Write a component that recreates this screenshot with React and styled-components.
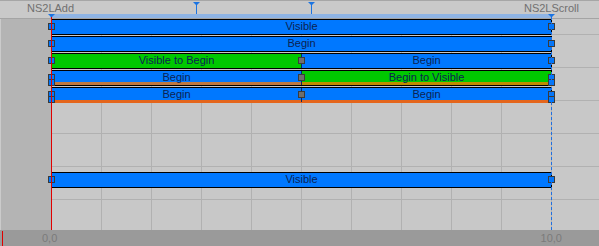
import React from 'react'
import styled, { createGlobalStyle } from 'styled-components'

const GlobalStyle = createGlobalStyle`
  html, body {
    margin: 0;
    padding: 0;
    background: #c8c8c8;
    overflow: hidden;
  }
`

// timeline scale: 50px per second, zero at x = 51
const ORIGIN = 51
const SCALE = 50
const toX = t => ORIGIN + t * SCALE

const Timeline = styled.div`
  display: grid;
  grid-template-rows: 18px 212px 16px;
  width: 599px;
  height: 246px;
  background: #c8c8c8;
  font-family: "Liberation Sans", Arial, sans-serif;
  font-size: 11px;
  overflow: hidden;
`

const Ruler = styled.div`
  position: relative;
  display: flex;
  flex-direction: column;
  border-top: 1px solid #a6a6a6;
  background: #c9c9c9;
`

const RulerLabels = styled.div`
  flex: 1;
  display: flex;
  justify-content: space-between;
  padding: 1px 20px 0 27px;
  line-height: 12px;
  color: #707070;
  white-space: nowrap;
`

const RangeStripe = styled.div`
  height: 4px;
  width: 501px;
  margin-left: 50px;
  background: #8fb4e4;
`

const Marker = styled.svg`
  position: absolute;
  top: ${p => p.$top}px;
  margin-left: -3px;
  overflow: visible;
`

const Body = styled.div`
  display: grid;
  grid-template-columns: 51px 1fr;
  border-top: 1px solid #a4a4a4;
`

const SidePanel = styled.div`
  background: #b4b4b4;
  border-left: 1px solid #cbcbcb;
`

const TrackArea = styled.div`
  position: relative;
  display: flex;
  flex-direction: column;
  background-color: #c8c8c8;
  background-image:
    repeating-linear-gradient(to right, #b1b1b1 0 1px, transparent 1px 50px),
    repeating-linear-gradient(to bottom, transparent 0 15px, #b1b1b1 15px 16px, transparent 16px 33px);
`

const Row = styled.div`
  height: 17px;
  flex: none;
`

const Bar = styled.div`
  position: relative;
  display: flex;
  box-sizing: border-box;
  width: 501px;
  height: 16px;
  border: 1px solid #000;
  border-bottom-color: ${p => p.$edge || '#000'};
`

const Segment = styled.div`
  flex: 1;
  display: flex;
  align-items: center;
  justify-content: center;
  background: ${p => (p.$green ? '#00c800' : '#0078ff')};
  box-shadow: ${p => (p.$stripe ? `inset 0 -${p.$stripeH}px 0 ${p.$stripe}` : 'none')};
  color: #0c2352;
  line-height: 13px;
  padding-bottom: 1px;
  white-space: nowrap;

  & + & {
    border-left: 1px solid #0b2860;
  }
`

const Handle = styled.div`
  position: absolute;
  box-sizing: border-box;
  width: 7px;
  height: 7px;
  top: ${p => p.$top}px;
  left: ${p => (p.$at === 'mid' ? '246px' : p.$at === 'start' ? '-4px' : 'auto')};
  right: ${p => (p.$at === 'end' ? '-4px' : 'auto')};
  border: 1px solid #3a3a3a;
  background: ${p => (p.$at === 'mid' ? '#6e6e6e' : '#0078ff')};
`

const Playhead = styled.div`
  position: absolute;
  top: -2px;
  bottom: 0;
  left: 0;
  width: 1px;
  background: #e00000;
`

const EndLine = styled.div`
  position: absolute;
  top: -2px;
  bottom: 0;
  left: 500px;
  width: 1px;
  background: repeating-linear-gradient(to bottom, #1f6fe0 0 3px, transparent 3px 5px);
`

const BottomRuler = styled.div`
  position: relative;
  display: flex;
  justify-content: space-between;
  padding: 2px 37px 0 42px;
  background: #9a9a9a;
  line-height: 13px;
  color: #7a7a7a;

  &::before {
    content: '';
    position: absolute;
    top: 1px;
    bottom: 0;
    left: 2px;
    width: 1px;
    background: #e00000;
  }
`

const tracks = [
  { segments: [{ label: 'Visible' }] },
  { segments: [{ label: 'Begin' }] },
  { segments: [{ label: 'Visible to Begin', green: true }, { label: 'Begin' }] },
  {
    segments: [{ label: 'Begin' }, { label: 'Begin to Visible', green: true }],
    stripe: 'rgba(255, 120, 0, 0.75)',
    stripeH: 3,
    doubled: true
  },
  {
    segments: [{ label: 'Begin' }, { label: 'Begin' }],
    stripe: '#e4661c',
    stripeH: 2,
    edge: '#e4661c',
    doubled: true
  },
  null,
  null,
  null,
  null,
  { segments: [{ label: 'Visible' }] }
]

const rulerMarks = [
  { t: 2.9, top: 1, tall: true },
  { t: 5.2, top: 1, tall: true },
  { t: 0, top: 13 },
  { t: 10, top: 13 }
]

function Track({ track }) {
  const split = track.segments.length > 1
  return (
    <Bar $edge={track.edge}>
      {track.segments.map((s, i) => (
        <Segment key={i} $green={s.green} $stripe={track.stripe} $stripeH={track.stripeH}>
          {s.label}
        </Segment>
      ))}
      <Handle $at="start" $top={3} />
      <Handle $at="end" $top={3} />
      {track.doubled && <Handle $at="start" $top={8} />}
      {track.doubled && <Handle $at="end" $top={8} />}
      {split && <Handle $at="mid" $top={3} />}
    </Bar>
  )
}

export default function App() {
  return (
    <>
      <GlobalStyle />
      <Timeline>
        <Ruler>
          <RulerLabels>
            <span>NS2LAdd</span>
            <span>NS2LScroll</span>
          </RulerLabels>
          <RangeStripe />
          {rulerMarks.map((m, i) => (
            <Marker key={i} $top={m.top} width="7" height={m.tall ? 12 : 4} style={{ left: toX(m.t) }}>
              <polygon points="0,0 7,0 3.5,3.5" fill="#1b74e2" />
              {m.tall && <rect x="3" y="0" width="1" height="12" fill="#1b74e2" />}
            </Marker>
          ))}
        </Ruler>
        <Body>
          <SidePanel />
          <TrackArea>
            {tracks.map((t, i) => (
              <Row key={i}>{t && <Track track={t} />}</Row>
            ))}
            <Playhead />
            <EndLine />
          </TrackArea>
        </Body>
        <BottomRuler>
          <span>0,0</span>
          <span>10,0</span>
        </BottomRuler>
      </Timeline>
    </>
  )
}
